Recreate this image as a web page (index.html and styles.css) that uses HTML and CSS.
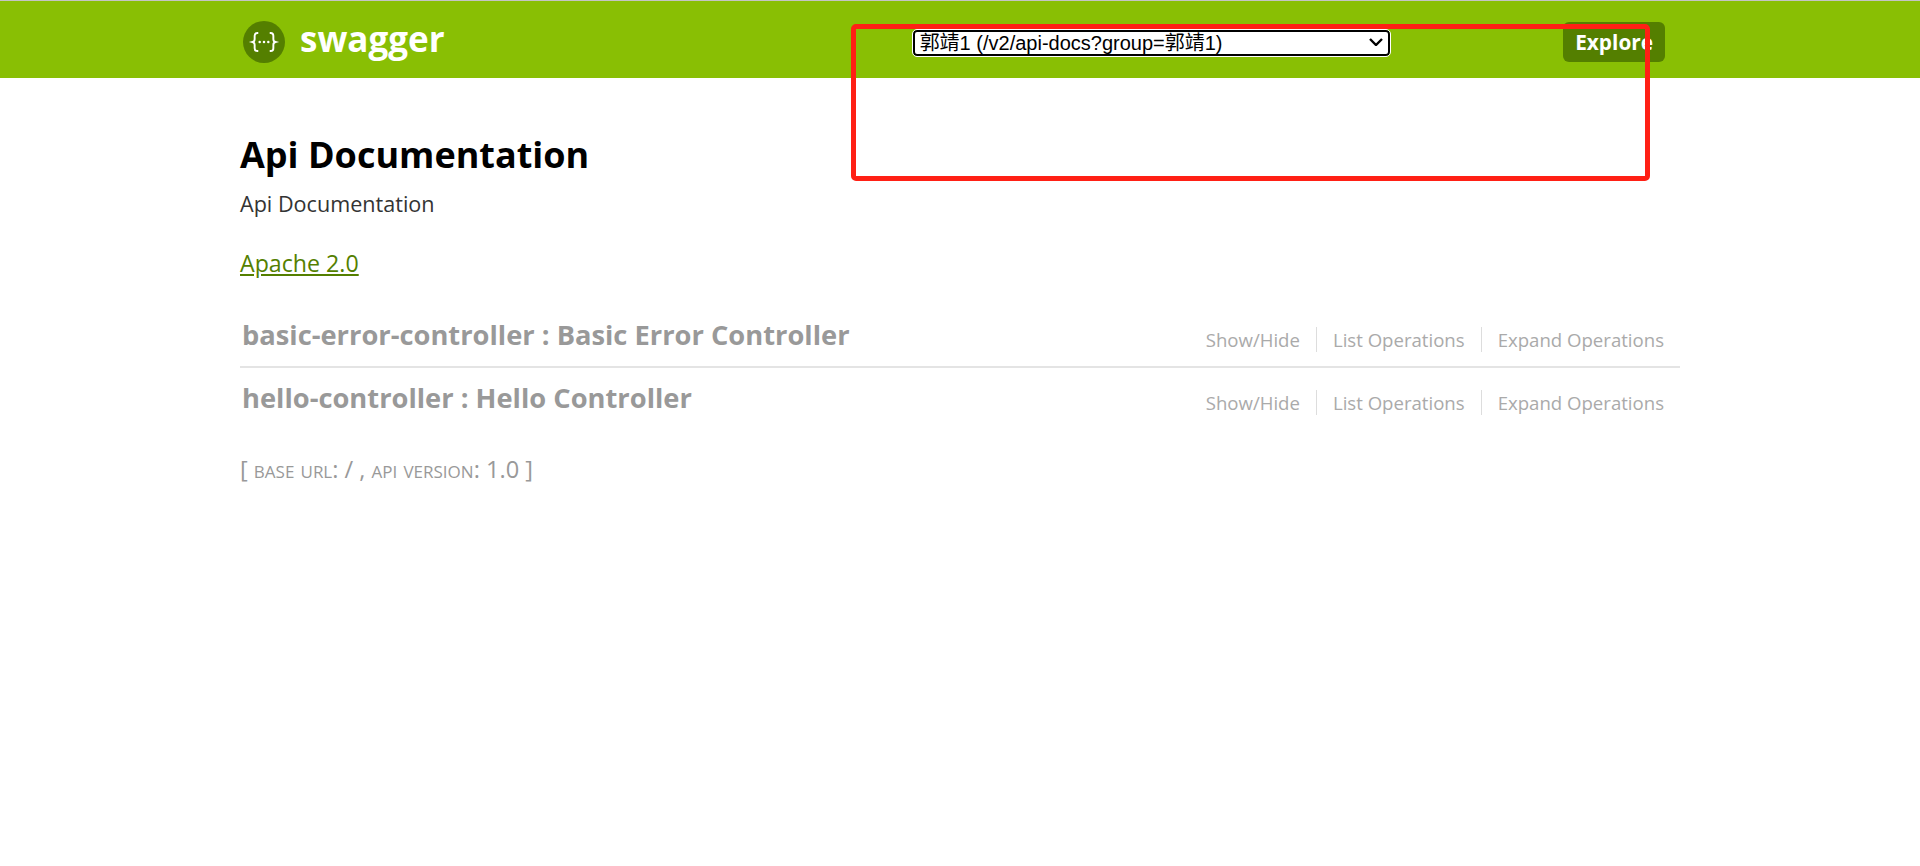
FILE: index.html
```html
<!DOCTYPE html>
<html lang="en">
<head>
    <meta charset="UTF-8">
    <meta name="viewport" content="width=device-width, initial-scale=1.0">
    <title>Swagger UI</title>
    <link rel="stylesheet" href="styles.css">
</head>
<body>
    <header class="header">
        <div class="header-container">
            <a class="logo" href="#">
                <svg class="logo-icon" width="42" height="42" viewBox="0 0 44 44">
                    <circle cx="22" cy="22" r="22" fill="#547f00"/>
                    <path d="M16 12.500h-1c-2 0-2.800 1-2.800 3v3.600c0 1.600-.7 2.500-2.200 2.900 1.500.4 2.200 1.300 2.200 2.900v3.600c0 2 .8 3 2.800 3h1" fill="none" stroke="#fff" stroke-width="2"/>
                    <path d="M28 12.500h1c2 0 2.800 1 2.800 3v3.600c0 1.600.7 2.500 2.200 2.900-1.500.4-2.200 1.300-2.200 2.900v3.600c0 2-.8 3-2.800 3h-1" fill="none" stroke="#fff" stroke-width="2"/>
                    <circle cx="17.500" cy="22" r="1.300" fill="#fff"/>
                    <circle cx="22" cy="22" r="1.300" fill="#fff"/>
                    <circle cx="26.500" cy="22" r="1.300" fill="#fff"/>
                </svg>
                <span class="logo-text">swagger</span>
            </a>
            <div class="spec-picker">
                <select class="spec-select">
                    <option>郭靖1 (/v2/api-docs?group=郭靖1)</option>
                </select>
                <svg class="spec-arrow" width="14" height="8" viewBox="0 0 14 8">
                    <path d="M1 1l6 6 6-6" fill="none" stroke="#000" stroke-width="2.400"/>
                </svg>
            </div>
            <a class="explore" href="#">Explore</a>
        </div>
        <div class="annotation"></div>
    </header>

    <main class="content">
        <h1 class="api-title">Api Documentation</h1>
        <p class="api-description">Api Documentation</p>
        <a class="license" href="#">Apache 2.0</a>

        <ul class="resources">
            <li class="resource">
                <h2 class="resource-name">basic-error-controller : Basic Error Controller</h2>
                <ul class="resource-actions">
                    <li><a href="#">Show/Hide</a></li>
                    <li><a href="#">List Operations</a></li>
                    <li><a href="#">Expand Operations</a></li>
                </ul>
            </li>
            <li class="resource">
                <h2 class="resource-name">hello-controller : Hello Controller</h2>
                <ul class="resource-actions">
                    <li><a href="#">Show/Hide</a></li>
                    <li><a href="#">List Operations</a></li>
                    <li><a href="#">Expand Operations</a></li>
                </ul>
            </li>
        </ul>

        <p class="api-info">[ <span class="caps">base url</span>: / , <span class="caps">api version</span>: 1.0 ]</p>
    </main>
</body>
</html>
```

FILE: styles.css
```css
/* Reset and base styles */
* {
    margin: 0;
    padding: 0;
    box-sizing: border-box;
}

body {
    font-family: "Open Sans", "Noto Sans", sans-serif;
    background: #fff;
}

ul {
    list-style: none;
}

/* Header */
.header {
    position: relative;
    height: 78px;
    background-color: #89bf04;
    border-top: 1px solid #c4c4c4;
}

.header-container {
    display: flex;
    align-items: center;
    width: 1440px;
    height: 77px;
    margin: 0 auto;
    padding: 7px 15px 0 3px;
}

.logo {
    display: flex;
    align-items: center;
    gap: 15px;
    margin-right: 468px;
    margin-bottom: 2px;
    text-decoration: none;
}

.logo-text {
    padding-bottom: 7px;
    color: #fff;
    font-size: 35px;
    font-weight: 700;
}

.spec-picker {
    position: relative;
    display: flex;
}

.spec-select {
    width: 477px;
    height: 26px;
    padding-left: 5px;
    font-family: "Liberation Sans", "Noto Sans CJK SC", sans-serif;
    font-size: 20px;
    color: #000;
    background-color: #fff;
    border: 2px solid #000;
    border-radius: 4px;
    outline: 1px solid #fff;
    appearance: none;
}

.spec-arrow {
    position: absolute;
    top: 8px;
    right: 7px;
}

.explore {
    margin-left: auto;
    margin-bottom: 2px;
    padding: 8px 12px;
    color: #fff;
    font-size: 20.800px;
    font-weight: 700;
    line-height: 24px;
    text-decoration: none;
    background-color: #547f00;
    border-radius: 6px;
}

/* Red box drawn over the screenshot */
.annotation {
    position: absolute;
    top: 23px;
    left: 851px;
    width: 799px;
    height: 157px;
    border: 5px solid #ff2015;
    border-radius: 5px;
}

/* Content */
.content {
    width: 1440px;
    margin: 0 auto;
}

.api-title {
    margin-top: 52px;
    font-size: 36px;
    font-weight: 700;
    color: #000;
}

.api-description {
    margin-top: 10px;
    font-size: 21.600px;
    color: #333;
}

.license {
    display: inline-block;
    margin-top: 29px;
    font-size: 23.200px;
    color: #547f00;
}

/* Resources */
.resources {
    margin-top: 24px;
}

.resource {
    display: flex;
    justify-content: space-between;
    align-items: flex-end;
    height: 65px;
    padding: 0 16px 13px 2px;
    border-bottom: 2px solid #e4e4e4;
}

.resource:last-child {
    height: 61px;
    border-bottom: none;
}

.resource-name {
    font-size: 27.300px;
    font-weight: 700;
    color: #999;
}

.resource-actions {
    display: flex;
    margin-bottom: 1px;
}

.resource-actions li {
    padding: 0 16px;
    border-right: 1px solid #ddd;
}

.resource-actions li:last-child {
    padding-right: 0;
    border-right: none;
}

.resource-actions a {
    font-size: 18.600px;
    color: #aaa;
    text-decoration: none;
}

/* Footer info */
.api-info {
    margin-top: 24px;
    font-size: 23.600px;
    color: #999;
}

.caps {
    font-variant: small-caps;
}
```
